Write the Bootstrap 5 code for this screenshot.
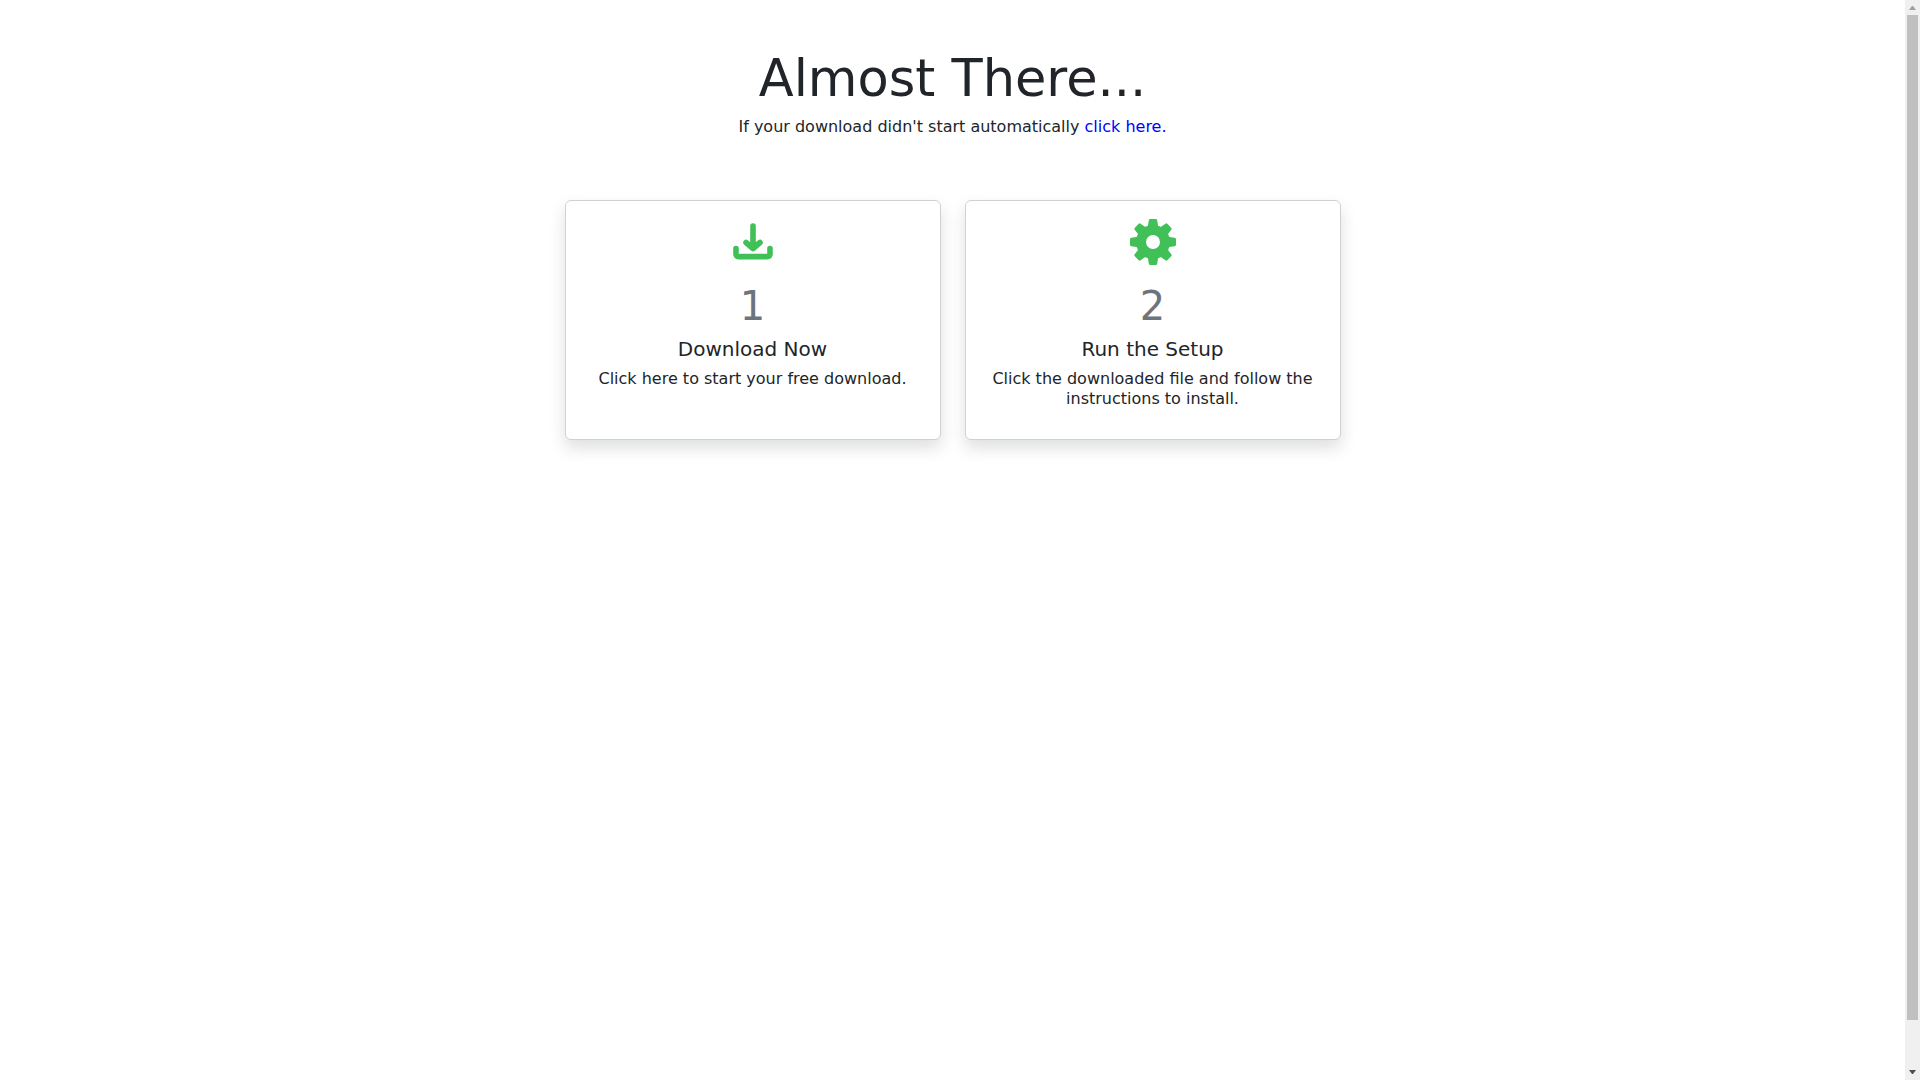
<!DOCTYPE html>
<html lang="en">
<head>
<meta charset="utf-8">
<meta name="viewport" content="width=device-width, initial-scale=1">
<title>Almost There...</title>
<link href="https://cdn.jsdelivr.net/npm/bootstrap@5.3.0/dist/css/bootstrap.min.css" rel="stylesheet">
<style>
body { font-family: "DejaVu Sans", sans-serif; color: #212529; }
.page-title { font-size: 51px; line-height: 61px; }
.page-note { line-height: 20px; }
.again-link { color: #0000ff; text-decoration: none; }
.steps { max-width: 776px; margin-top: 63px; }
.step-card { border-color: #d0d1d2; min-height: 240px; color: inherit; text-decoration: none; }
.step-card .card-body { padding: 17px 16px 14px; }
.step-icon { width: 48px; height: 48px; color: #41c057; }
.step-number { font-size: 40px; line-height: 48px; margin-bottom: 7px; color: #6c757d; }
.step-name { font-size: 20px; line-height: 24px; }
.step-text { line-height: 20px; }
.scroll-track { width: 15px; height: 100vh; top: 0; background: #f0f0f0; }
.scroll-arrow { width: 15px; height: 15px; }
.scroll-rail { padding: 0 2px; }
.scroll-thumb { height: 95.7%; background: #c0c0c0; }
</style>
<script src="https://cdn.jsdelivr.net/npm/bootstrap@5.3.0/dist/js/bootstrap.bundle.min.js"></script>
</head>
<body class="d-flex min-vh-100">
<main class="flex-fill pt-5 text-center">
  <h1 class="page-title fw-normal mb-2">Almost There...</h1>
  <p class="page-note mb-0">If your download didn't start automatically <a class="again-link" href="#download">click here.</a></p>
  <div class="container steps px-0">
    <div class="row align-items-start">
      <div class="col-md-6">
        <a class="card step-card shadow" href="#download">
          <div class="card-body">
            <svg class="step-icon d-block mx-auto mb-3" viewBox="0 0 48 48" fill="none" stroke="currentColor" stroke-width="5.6" stroke-linecap="round" stroke-linejoin="round" aria-hidden="true">
              <path d="M7 30.500v5.500Q7 38.600 10 38.600H38Q41 38.600 41 36v-5.500"/>
              <path d="M24 8v22M17 24.500l7 6 7-6"/>
              <path d="M19 24.500h10L24 31z" fill="currentColor" stroke-width="1"/>
            </svg>
            <h2 class="step-number fw-normal">1</h2>
            <h3 class="step-name fw-normal mb-2">Download Now</h3>
            <p class="step-text mb-3">Click here to start your free download.</p>
          </div>
        </a>
      </div>
      <div class="col-md-6">
        <div class="card step-card shadow">
          <div class="card-body">
            <svg class="step-icon d-block mx-auto mb-3" viewBox="-24 -24 48 48" fill="currentColor" aria-hidden="true">
              <defs><path id="tooth" d="M-7-15L-5-16.500-4.200-21.700Q-4-23-2.700-23H2.700Q4-23 4.200-21.700L5-16.500 7-15z"/></defs>
              <path fill-rule="evenodd" d="M-16.500 0a16.500 16.500 0 1 0 33 0a16.500 16.500 0 1 0-33 0zM-7 0a7 7 0 1 1 14 0a7 7 0 1 1-14 0z"/>
              <use href="#tooth"/>
              <use href="#tooth" transform="rotate(45)"/>
              <use href="#tooth" transform="rotate(90)"/>
              <use href="#tooth" transform="rotate(135)"/>
              <use href="#tooth" transform="rotate(180)"/>
              <use href="#tooth" transform="rotate(225)"/>
              <use href="#tooth" transform="rotate(270)"/>
              <use href="#tooth" transform="rotate(315)"/>
            </svg>
            <h2 class="step-number fw-normal">2</h2>
            <h3 class="step-name fw-normal mb-2">Run the Setup</h3>
            <p class="step-text mb-3">Click the downloaded file and follow the instructions to install.</p>
          </div>
        </div>
      </div>
    </div>
  </div>
</main>
<div class="scroll-track position-sticky d-flex flex-column flex-shrink-0" aria-hidden="true">
  <svg class="scroll-arrow" viewBox="0 0 15 15"><path d="M4 10L7 6h1l3 4z" fill="#a0a0a0"/></svg>
  <div class="scroll-rail flex-fill d-flex flex-column"><div class="scroll-thumb"></div></div>
  <svg class="scroll-arrow" viewBox="0 0 15 15"><path d="M4 5L7 9h1l3-4z" fill="#505050"/></svg>
</div>
</body>
</html>
